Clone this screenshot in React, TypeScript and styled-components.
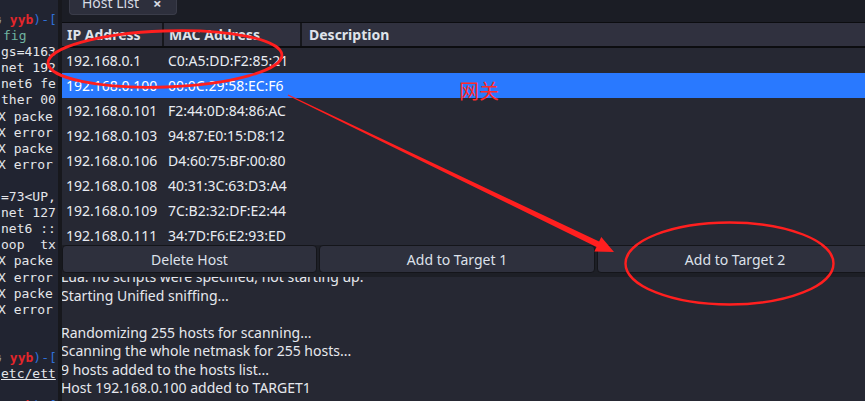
import React from "react";
import styled, { createGlobalStyle } from "styled-components";

const Global = createGlobalStyle`
  html, body { margin: 0; padding: 0; background: #262833; }
  body { width: 865px; height: 401px; overflow: hidden; }
  #root { width: 865px; height: 401px; }
`;

const Screen = styled.div`
  position: relative;
  display: flex;
  width: 865px;
  height: 401px;
  overflow: hidden;
  font-family: "Noto Sans", "Open Sans", sans-serif;
`;

const Terminal = styled.div`
  width: 58px;
  flex: none;
  background: #212431;
  padding-top: 12px;
  overflow: hidden;
  font-family: "DejaVu Sans Mono", "Liberation Mono", monospace;
  font-size: 13px;
  line-height: 16.1px;
  color: #e4e6ea;
`;

const TermLine = styled.div<{ $shift?: number }>`
  white-space: pre;
  height: 16.1px;
  margin-left: ${(p) => (p.$shift ?? 1)}px;
`;

const Red = styled.span`
  color: #e3262b;
  font-weight: bold;
`;
const Blue = styled.span`
  color: #2f6fd8;
`;
const Teal = styled.span`
  color: #6fb3a0;
`;
const Skull = styled.span`
  color: #9aa0aa;
`;
const Under = styled.span`
  text-decoration: underline;
`;

const Window = styled.div`
  flex: 1;
  display: flex;
  flex-direction: column;
  min-width: 0;
  background: #262833;
  border-left: 4px solid #17181d;
`;

const TabBar = styled.div`
  height: 22px;
  flex: none;
  background: #1b1d25;
  border-bottom: 1px solid #0c0d10;
  padding-left: 7px;
  display: flex;
  align-items: flex-start;
`;

const Tab = styled.div`
  margin-top: -9px;
  height: 24px;
  width: 108px;
  box-sizing: border-box;
  background: #2d2f3c;
  border: 1px solid #3a3c49;
  border-top: none;
  border-radius: 0 0 4px 4px;
  display: flex;
  align-items: center;
  padding-left: 12px;
  gap: 14px;
  color: #d7dbe3;
  font-size: 14px;
`;

const Close = styled.span`
  font-weight: bold;
  font-size: 15px;
`;

const Table = styled.div`
  flex: none;
  display: flex;
  flex-direction: column;
`;

const Cols = `
  display: grid;
  grid-template-columns: 102px 138px 1fr;
`;

const HeaderRow = styled.div`
  ${Cols}
  height: 23px;
  background: #30313f;
  border-bottom: 2px solid #0c0d10;
`;

const HeaderCell = styled.div<{ $last?: boolean; $pad?: number }>`
  display: flex;
  align-items: center;
  padding-left: ${(p) => p.$pad ?? 5}px;
  font-weight: bold;
  font-size: 14px;
  color: #dfe3ea;
  border-right: ${(p) => (p.$last ? "none" : "2px solid #16171c")};
`;

const Rows = styled.div`
  height: 196px;
  overflow: hidden;
`;

const Row = styled.div<{ $selected?: boolean }>`
  ${Cols}
  height: 25px;
  background: ${(p) => (p.$selected ? "#2979ff" : "transparent")};
  color: ${(p) => (p.$selected ? "#ffffff" : "#e9ecf2")};
  font-size: 14px;
`;

const Cell = styled.div`
  display: flex;
  align-items: center;
  padding-left: 4px;
  white-space: nowrap;
`;

const ButtonBar = styled.div`
  flex: none;
  margin-top: 1px;
  padding-bottom: 4px;
  background: #1d1f26;
  display: grid;
  grid-template-columns: 255px 276px 276px;
  gap: 2px;
`;

const Button = styled.button`
  height: 28px;
  margin: 0;
  background: #2e303d;
  border: 1px solid #14151a;
  border-radius: 4px;
  color: #dde1ea;
  font-family: "Noto Sans", "Open Sans", sans-serif;
  font-size: 14px;
  padding: 0;
`;

const Log = styled.div`
  flex: 1;
  overflow: hidden;
  background: #262833;
`;

const LogText = styled.div`
  margin-top: -9px;
  margin-left: -1px;
  font-size: 14px;
  line-height: 18.5px;
  color: #e6e8ee;
`;

const LogLine = styled.div`
  height: 18.5px;
  white-space: pre;
`;

const Overlay = styled.svg`
  position: absolute;
  left: 0;
  top: 0;
  pointer-events: none;
`;

const Note = styled.div`
  position: absolute;
  left: 459px;
  top: 76px;
  font-family: "Noto Sans CJK SC", sans-serif;
  font-weight: 400;
  font-size: 20px;
  color: #ff2a2a;
  pointer-events: none;
`;

const hosts: [string, string][] = [
  ["192.168.0.1", "C0:A5:DD:F2:85:21"],
  ["192.168.0.100", "00:0C:29:58:EC:F6"],
  ["192.168.0.101", "F2:44:0D:84:86:AC"],
  ["192.168.0.103", "94:87:E0:15:D8:12"],
  ["192.168.0.106", "D4:60:75:BF:00:80"],
  ["192.168.0.108", "40:31:3C:63:D3:A4"],
  ["192.168.0.109", "7C:B2:32:DF:E2:44"],
  ["192.168.0.111", "34:7D:F6:E2:93:ED"],
  ["192.168.0.112", "B8:27:EB:10:4A:6C"],
];

const logLines = [
  "Lua: no scripts were specified, not starting up.",
  "Starting Unified sniffing...",
  "",
  "Randomizing 255 hosts for scanning...",
  "Scanning the whole netmask for 255 hosts...",
  "9 hosts added to the hosts list...",
  "Host 192.168.0.100 added to TARGET1",
];

const Prompt = () => (
  <>
    <Skull>㉿ </Skull>
    <Red>yyb</Red>
    <Blue>)-[</Blue>
  </>
);

export default function App() {
  return (
    <>
      <Global />
      <Screen>
        <Terminal>
          <TermLine $shift={-11}>
            <Prompt />
          </TermLine>
          <TermLine $shift={3}>
            <Teal>fig</Teal>
          </TermLine>
          <TermLine>gs=4163</TermLine>
          <TermLine>net 192</TermLine>
          <TermLine>net6 fe</TermLine>
          <TermLine>ther 00</TermLine>
          <TermLine $shift={-2}>X packe</TermLine>
          <TermLine $shift={-2}>X error</TermLine>
          <TermLine $shift={-2}>X packe</TermLine>
          <TermLine $shift={-2}>X error</TermLine>
          <TermLine> </TermLine>
          <TermLine>=73&lt;UP,</TermLine>
          <TermLine>net 127</TermLine>
          <TermLine>net6 ::</TermLine>
          <TermLine>oop  tx</TermLine>
          <TermLine $shift={-2}>X packe</TermLine>
          <TermLine $shift={-2}>X error</TermLine>
          <TermLine $shift={-2}>X packe</TermLine>
          <TermLine $shift={-2}>X error</TermLine>
          <TermLine> </TermLine>
          <TermLine> </TermLine>
          <TermLine $shift={-11}>
            <Prompt />
          </TermLine>
          <TermLine>
            <Under>etc/ett</Under>
          </TermLine>
          <TermLine> </TermLine>
          <TermLine $shift={-11}>
            <Prompt />
          </TermLine>
        </Terminal>

        <Window>
          <TabBar>
            <Tab>
              <span>Host List</span>
              <Close>×</Close>
            </Tab>
          </TabBar>

          <Table>
            <HeaderRow>
              <HeaderCell>IP Address</HeaderCell>
              <HeaderCell>MAC Address</HeaderCell>
              <HeaderCell $last $pad={7}>
                Description
              </HeaderCell>
            </HeaderRow>
            <Rows>
              {hosts.map(([ip, mac], i) => (
                <Row key={ip} $selected={i === 1}>
                  <Cell>{ip}</Cell>
                  <Cell>{mac}</Cell>
                  <Cell />
                </Row>
              ))}
            </Rows>
          </Table>

          <ButtonBar>
            <Button>Delete Host</Button>
            <Button>Add to Target 1</Button>
            <Button>Add to Target 2</Button>
          </ButtonBar>

          <Log>
            <LogText>
              {logLines.map((l, i) => (
                <LogLine key={i}>{l || " "}</LogLine>
              ))}
            </LogText>
          </Log>
        </Window>

        <Overlay width="865" height="401" viewBox="0 0 865 401">
          <ellipse
            cx="165"
            cy="59"
            rx="117"
            ry="28"
            transform="rotate(-2 165 59)"
            fill="none"
            stroke="#ff1f1f"
            strokeWidth="2.8"
          />
          <ellipse
            cx="729.5"
            cy="263.5"
            rx="104"
            ry="41"
            fill="none"
            stroke="#ff1f1f"
            strokeWidth="2.4"
          />
          <polygon
            points="288.2,94.6 599.1,241.5 601.3,237 614,252 594.3,251.4 596.5,246.9 287.8,95.4"
            fill="#ff1f1f"
          />
        </Overlay>
        <Note>网关</Note>
      </Screen>
    </>
  );
}
